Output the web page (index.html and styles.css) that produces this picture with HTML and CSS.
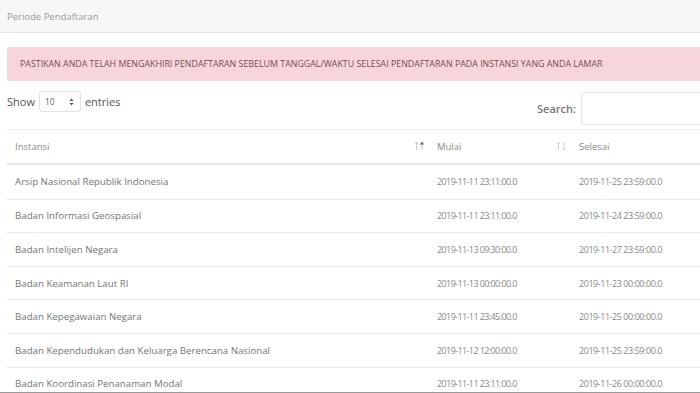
FILE: index.html
```html
<!DOCTYPE html>
<html lang="id">
<head>
<meta charset="utf-8">
<title>Periode Pendaftaran</title>
<link rel="stylesheet" href="styles.css">
</head>
<body>
<div class="page">
  <div class="card-header">Periode Pendaftaran</div>
  <div class="card-body">
    <div class="alert">PASTIKAN ANDA TELAH MENGAKHIRI PENDAFTARAN SEBELUM TANGGAL/WAKTU SELESAI PENDAFTARAN PADA INSTANSI YANG ANDA LAMAR</div>
    <div class="controls">
      <div class="length">Show <span class="select">10 <svg class="updown" width="5" height="8" viewBox="0 0 5 8"><path d="M2.5 0.5 L4.5 3 H0.5 Z M2.5 7.5 L0.5 5 H4.5 Z" fill="#555"/></svg></span> entries</div>
      <div class="search">Search: <span class="input"></span></div>
    </div>
    <div class="table">
      <div class="row head">
        <div class="cell c1">Instansi <svg class="sort" width="11" height="10" viewBox="0 0 11 10"><path d="M2.5 1 V9 M0.8 2.8 L2.5 1 L4.2 2.8" stroke="#c9c9c9" stroke-width="1" fill="none"/><path d="M8 3 V9" stroke="#7d8fb3" stroke-width="1" stroke-dasharray="1 1"/><path d="M5.8 3.5 L8 0.5 L10.2 3.5 Z" fill="#5f6f95"/></svg></div>
        <div class="cell c2">Mulai <svg class="sort" width="11" height="10" viewBox="0 0 11 10"><path d="M2.5 1 V9 M0.8 2.8 L2.5 1 L4.2 2.8" stroke="#cfcfcf" stroke-width="1" fill="none"/><path d="M8 1 V9 M6.3 7.2 L8 9 L9.7 7.2" stroke="#cfcfcf" stroke-width="1" fill="none"/></svg></div>
        <div class="cell c3">Selesai</div>
      </div>
      <div class="row"><div class="cell c1">Arsip Nasional Republik Indonesia</div><div class="cell c2">2019-11-11 23:11:00.0</div><div class="cell c3">2019-11-25 23:59:00.0</div></div>
      <div class="row"><div class="cell c1">Badan Informasi Geospasial</div><div class="cell c2">2019-11-11 23:11:00.0</div><div class="cell c3">2019-11-24 23:59:00.0</div></div>
      <div class="row"><div class="cell c1">Badan Intelijen Negara</div><div class="cell c2">2019-11-13 09:30:00.0</div><div class="cell c3">2019-11-27 23:59:00.0</div></div>
      <div class="row"><div class="cell c1">Badan Keamanan Laut RI</div><div class="cell c2">2019-11-13 00:00:00.0</div><div class="cell c3">2019-11-23 00:00:00.0</div></div>
      <div class="row"><div class="cell c1">Badan Kepegawaian Negara</div><div class="cell c2">2019-11-11 23:45:00.0</div><div class="cell c3">2019-11-25 00:00:00.0</div></div>
      <div class="row"><div class="cell c1">Badan Kependudukan dan Keluarga Berencana Nasional</div><div class="cell c2">2019-11-12 12:00:00.0</div><div class="cell c3">2019-11-25 23:59:00.0</div></div>
      <div class="row"><div class="cell c1">Badan Koordinasi Penanaman Modal</div><div class="cell c2">2019-11-11 23:11:00.0</div><div class="cell c3">2019-11-26 00:00:00.0</div></div>
    </div>
  </div>
</div>
</body>
</html>
```

FILE: styles.css
```css
html, body {
  margin: 0;
  padding: 0;
  background: #ffffff;
  overflow: hidden;
}
body {
  font-family: "Open Sans", "Liberation Sans", sans-serif;
  color: #7a7a7a;
}
.page {
  width: 700px;
  height: 392px;
  overflow: hidden;
  border-bottom: 1px solid #9a9a9a;
}
.card-header {
  height: 33px;
  box-sizing: border-box;
  background: #f7f7f7;
  border-bottom: 1px solid #e6e6e6;
  padding: 0 7px;
  font-size: 9.5px;
  line-height: 33px;
  color: #9a9a9a;
}
.card-body {
  width: 754px;
  padding: 14px 0 0 7px;
}
.alert {
  height: 34px;
  box-sizing: border-box;
  background: #f6d6da;
  border-radius: 3px;
  padding: 0 13px;
  font-size: 8.85px;
  line-height: 34px;
  color: #7c4a52;
  white-space: nowrap;
}
.controls {
  display: flex;
  justify-content: space-between;
  align-items: flex-start;
  margin-top: 10px;
  height: 38px;
  font-size: 11px;
  color: #555;
}
.length {
  display: flex;
  align-items: center;
  gap: 4px;
  height: 21px;
}
.select {
  display: inline-flex;
  align-items: center;
  justify-content: space-between;
  width: 42px;
  height: 21px;
  box-sizing: border-box;
  border: 1px solid #e2e2e2;
  border-radius: 3px;
  padding: 0 6px 0 5px;
  font-size: 8.5px;
  color: #666;
}
.search {
  display: flex;
  align-items: center;
  gap: 5px;
  margin-top: 1px;
  font-weight: 600;
  color: #777;
}
.input {
  display: block;
  width: 180px;
  height: 33px;
  box-sizing: border-box;
  border: 1px solid #e2e2e2;
  border-radius: 3px;
}
.table {
  border-top: 1px solid #f0f0f0;
  width: 760px;
}
.row {
  display: grid;
  grid-template-columns: 423px 142px 195px;
  height: 33.6px;
  border-top: 1px solid #e9e9e9;
  box-sizing: border-box;
  font-size: 9.7px;
  color: #757575;
}
.row.head {
  border-top: none;
  height: 35px;
  border-bottom: 2px solid #e6e6e6;
  color: #8a8a8a;
  font-size: 9.5px;
}
.row.head + .row {
  border-top: none;
}
.cell {
  display: flex;
  align-items: center;
  padding-left: 8px;
  white-space: nowrap;
}
.head .cell {
  justify-content: space-between;
  padding-right: 5px;
  padding-bottom: 1px;
}
.head .c3 {
  justify-content: flex-start;
}
.c2, .c3 {
  padding-left: 7px;
  color: #888;
}
.row:not(.head) .c2 {
  font-size: 9px;
  letter-spacing: -0.6px;
}
.row:not(.head) .c3 {
  font-size: 9px;
  letter-spacing: -0.45px;
}
.sort {
  display: block;
}
```
